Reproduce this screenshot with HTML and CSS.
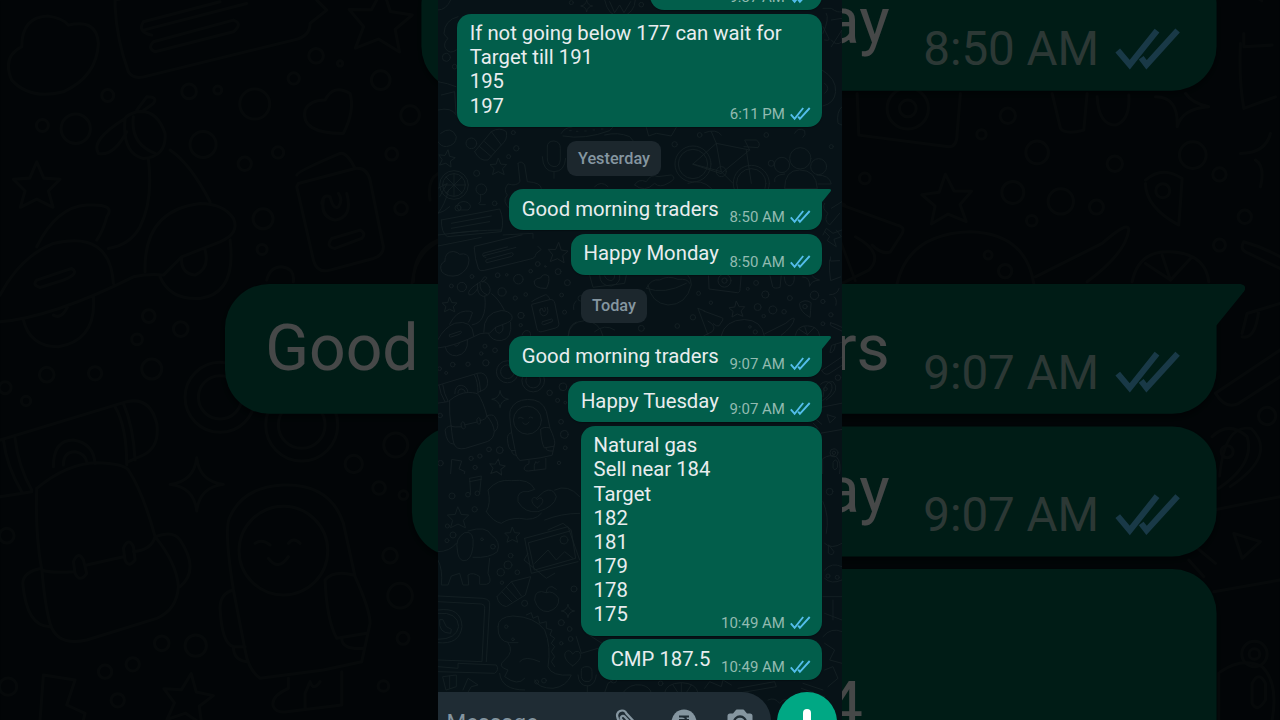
FILE: index.html
```html
<!DOCTYPE html>
<html lang="en">
<head>
<meta charset="utf-8">
<title>Chat</title>
<link rel="stylesheet" href="styles.css">
</head>
<body>
<svg class="defs" width="0" height="0" aria-hidden="true">
  <defs>
    <path id="star" d="M0-10 3-3 10-2.500 5 2.500 7 9.500 0 6-7 9.500-5 2.500-10-2.500-3-3Z"/>
    <path id="spark" d="M0-10Q1-1 10 0Q1 1 0 10Q-1 1-10 0Q-1-1 0-10Z"/>
    <path id="heart" d="M0 9C-14 0-10-10-4-9Q-1-8 0-5Q3-10 7-8C13-4 8 4 0 9Z"/>
    <g id="ticks"><path d="M.8 6.300 4.600 10.800 13.200 0M8.200 8.600 9.900 10.800 19.700 0"/></g>
  </defs>
</svg>

<div class="stage">
  <div class="backdrop" aria-hidden="true"></div>
  <main class="phone">
    <div class="screen">
      <svg class="wallpaper" viewBox="0 0 404 720" aria-hidden="true">
        <g transform="scale(.3333)" stroke-width="2.600">
          <path d="M60 50Q20 60 18 100Q22 110 30 115Q15 130 22 145Q35 165 55 150M0 30Q25 30 38 0M500 0Q510 50 550 50Q590 40 592 0M515 5 530 38 545 15 558 38 578 5"/>
          <circle cx="25" cy="172" r="12"/><circle cx="50" cy="200" r="7"/><circle cx="400" cy="8" r="6"/><circle cx="610" cy="14" r="7"/>
          <use href="#spark" stroke-width="1.400" transform="translate(446 18) scale(1.800)"/>
          <path d="M0 245Q30 250 54 260M0 330Q40 320 55 345M10 285 50 275 54 340M8 400Q40 375 55 410Q55 435 25 440Q8 440 0 425"/>
          <path d="M110 455 160 395Q185 380 205 395Q210 420 190 435L150 480Q125 485 110 455M125 440 160 470M160 395 190 435M140 425 172 455"/>
          <circle cx="100" cy="430" r="16"/><circle cx="235" cy="445" r="8"/><circle cx="212" cy="470" r="6"/><circle cx="116" cy="520" r="9"/><circle cx="226" cy="398" r="6"/>
          <use href="#star" stroke-width="1.040" transform="translate(26 475) rotate(10) scale(2.500)"/><use href="#star" stroke-width="1.040" transform="translate(181 500) scale(2.500)"/>
          <circle cx="48" cy="555" r="43"/><circle cx="48" cy="555" r="34"/><path d="M48 521V589M14 555H82M24 531 72 579M24 579 72 531M0 565 28 550 5 590M0 640Q20 615 32 570"/>
          <circle cx="130" cy="568" r="16"/><path d="M128 584V605Q118 610 125 614H142M62 610Q50 625 65 630H90Q105 620 90 608Q75 600 62 610"/>
          <path d="M240 490Q250 480 260 495L268 545Q310 548 310 565M240 490 246 545Q235 560 210 552Q195 570 208 585Q190 605 215 625M328 440Q328 423 348 423Q367 425 367 445V480Q365 500 348 500Q328 497 328 475ZM313 470Q315 515 348 515Q380 515 383 475M348 515V535"/>
          <path d="M370 400Q380 382 402 381M375 408Q440 420 515 392L525 381M395 392H400M415 394H420M440 393H445M465 390H470M490 387H495M500 405Q540 395 575 410L585 422M625 382 632 408 655 400 700 408 715 382"/>
          <circle cx="765" cy="492" r="54"/><circle cx="765" cy="492" r="44"/><circle cx="940" cy="550" r="54"/><circle cx="940" cy="550" r="44"/>
          <path d="M765 492 835 430 935 450 850 520ZM835 430 820 395M800 398Q835 385 850 405M935 450 920 420H955Q970 430 960 443L918 440M765 492 850 515 885 550M835 430 850 515M925 450 940 550"/><circle cx="850" cy="515" r="15"/>
          <circle cx="710" cy="433" r="8"/><circle cx="785" cy="405" r="7"/><circle cx="985" cy="405" r="7"/><circle cx="1000" cy="490" r="9"/><circle cx="1180" cy="440" r="6"/>
          <circle cx="1087" cy="475" r="32"/><circle cx="1032" cy="495" r="23"/><circle cx="1142" cy="500" r="24"/><path d="M1040 565Q1040 510 1085 510Q1135 510 1138 565ZM1010 545Q1005 525 1040 522M1137 525Q1175 525 1180 552H1140M1070 400Q1080 380 1100 392Q1105 405 1095 412"/>
          <path d="M590 555Q600 535 625 545Q640 520 660 530L700 525Q720 535 690 550Q665 565 650 550Q620 580 590 555M470 560Q490 540 510 560M750 550Q790 535 820 565"/>
          <path d="M1155 100Q1175 55 1165 40M1155 80 1170 110Q1180 125 1160 120M1180 60 1212 55M1180 140 1212 90V125Q1195 140 1180 120M1152 210Q1195 235 1193 275Q1190 310 1155 318M1160 250Q1180 265 1160 280M1212 320Q1195 335 1200 370L1212 375M1155 25H1180Q1200 40 1212 35"/>
          <path d="M0 640Q20 635 35 620M10 660 185 627Q200 660 190 695L28 710Q10 700 10 660M40 670 160 648M40 685 155 665M40 700 120 692M195 705 285 700V715M1160 610Q1150 625 1170 640Q1155 660 1175 675L1205 640M1180 625 1212 605M1155 705 1165 685 1185 700 1212 690"/>
          <circle cx="60" cy="624" r="9"/><circle cx="170" cy="610" r="7"/>
        </g>
        <g transform="translate(0 230) scale(.3333)" stroke-width="2.600">
          <path d="M455 136 465 172 560 160 565 136M485 136Q485 168 520 168Q550 160 545 136M500 138Q505 152 522 152 532 145 530 136M630 165Q640 220 690 225Q745 225 760 165Q760 145 750 136M625 175Q680 195 745 160M625 175Q640 145 665 150 690 135 720 148Q750 145 755 160"/>
          <path d="M0 15Q110 0 190 0M0 48 130 22M780 235 800 243M810 315 780 235M390 318Q395 275 440 272Q485 275 495 318M470 305Q500 280 530 300"/>
          <circle cx="610" cy="295" r="9"/><circle cx="765" cy="262" r="8"/><circle cx="718" cy="288" r="7"/><circle cx="428" cy="205" r="8"/><circle cx="782" cy="190" r="6"/>
          <path d="M1160 5 1175 20 1168 32 1195 50 1188 28 1210 20 1195 0M1155 500Q1160 450 1185 455Q1210 480 1165 510"/>
        </g>
        <g transform="translate(0 470) scale(.3333)" stroke-width="2.600">
          <path d="M95 25 130 18 125 70M95 25 98 72M95 35 130 28"/><circle cx="90" cy="74" r="7"/><circle cx="118" cy="70" r="7"/><circle cx="42" cy="78" r="9"/><circle cx="110" cy="118" r="8"/><circle cx="27" cy="212" r="6"/><circle cx="45" cy="195" r="9"/><circle cx="28" cy="168" r="6"/>
          <use href="#star" stroke-width=".810" transform="translate(60 143) scale(3.200)"/><use href="#star" stroke-width="1.130" transform="translate(223 195) scale(2.300)"/>
          <path d="M145 125Q160 100 150 60Q180 25 220 32Q275 25 290 58L270 65Q235 60 240 95Q260 130 300 125Q350 110 355 80Q345 50 318 65L295 85M145 125Q165 155 190 160Q210 145 245 145Q290 155 310 130M350 60Q390 40 425 80M320 150Q370 130 425 130"/><use href="#heart" stroke-width="1.500" transform="translate(298 98) scale(1.700)"/>
          <path d="M0 245Q35 245 55 220M58 240Q50 205 80 188Q110 180 105 230Q100 275 75 272Q60 268 58 240M90 183Q145 165 160 195Q190 215 178 245Q155 265 105 262M155 265 150 310Q165 340 145 343H125V320Q105 305 90 315L92 345H75L65 310 40 318 30 345H10Q15 300 0 270"/><circle cx="132" cy="208" r="4"/><circle cx="165" cy="230" r="7"/>
          <path d="M272 218 400 182 413 265 290 300ZM260 205 390 170 425 270M260 205 280 310 420 275M270 250 258 270 325 325 350 310M330 180 375 160 400 180M290 280 330 240 355 270 380 245 405 265"/><circle cx="378" cy="210" r="12"/>
          <circle cx="188" cy="307" r="11"/><circle cx="210" cy="285" r="12"/><circle cx="218" cy="257" r="7"/><circle cx="238" cy="307" r="7"/><circle cx="192" cy="338" r="5"/><circle cx="260" cy="400" r="9"/><circle cx="408" cy="357" r="9"/>
          <path d="M177 380 220 335 278 320 262 375 205 410Q180 405 177 380M192 366 222 396M220 335 250 378M205 352 238 388M325 368Q290 355 290 390Q300 425 330 425Q365 415 362 385Q345 360 325 368Q325 350 342 350M342 350 355 358"/>
          <path d="M0 378 135 385Q158 388 155 405L145 575M0 395 130 402Q142 405 140 415L132 575 0 570M0 590 60 595V580L175 585Q185 600 170 610L0 605M0 420Q70 410 72 470Q65 525 0 518M0 430Q60 425 62 470Q55 508 0 508M5 450Q0 490 38 490L40 478 25 470 15 450Z"/>
          <path d="M180 470Q180 440 225 438Q290 440 320 480Q340 530 330 590Q340 620 400 615Q385 650 345 655 300 655 290 630M180 470Q178 515 215 518H240M210 518Q230 545 200 570Q175 590 210 600L200 620Q240 650 260 625M245 575Q260 555 305 575M265 435 280 428 285 445 300 438 305 460 325 455 325 475 342 480 336 495 350 505 340 520 350 530 340 545 350 560 340 575 350 590M185 610Q190 660 260 660"/><circle cx="205" cy="470" r="5"/><circle cx="225" cy="508" r="4"/>
          <use href="#spark" stroke-width="1.300" transform="translate(390 423) scale(2)"/><circle cx="370" cy="458" r="9"/><circle cx="395" cy="477" r="7"/><circle cx="398" cy="507" r="7"/><circle cx="370" cy="520" r="5"/><use href="#heart" stroke-width="1.040" transform="translate(404 565) scale(2.500)"/>
          <path d="M15 620 55 615V650L25 660ZM35 618V655M75 660 90 625 120 645 100 650 85 675M430 600Q430 590 447 590Q462 590 462 605V625Q455 638 447 635Q432 635 430 620ZM420 615Q422 648 450 648Q472 645 475 615M448 648V668M500 668 510 640 535 625M555 668Q575 640 610 645Q635 650 640 668M680 668Q685 640 730 638Q775 640 780 668M730 640V668M705 645 720 668M760 645 745 668M800 655 815 635 850 650 855 630 880 645M900 655 1010 635 1015 650 910 668M990 690Q1010 680 1025 700Q1040 680 1060 695M1095 640 1155 660M1090 655 1160 680M1155 500Q1180 470 1212 485M1160 520 1190 540 1175 570 1212 580M1160 600 1185 590 1200 625 1170 650M1160 300Q1180 275 1212 290M1160 325Q1180 345 1212 330M1155 380H1212M1185 390V450M1160 430 1212 450M1160 220Q1180 240 1212 220M415 500 430 550 480 535M445 490 500 525"/>
          <circle cx="527" cy="630" r="9"/><circle cx="668" cy="640" r="7"/><circle cx="318" cy="632" r="7"/><circle cx="296" cy="636" r="6"/><circle cx="1175" cy="65" r="10"/><circle cx="1170" cy="318" r="6"/><circle cx="1198" cy="322" r="6"/><path d="M1155 95Q1175 140 1165 190M1172 225 1188 245Q1185 260 1172 250Z"/>
        </g>
        <g transform="translate(0 246.400) scale(.10522)" stroke-width="9">
          <path d="M65 140Q65 50 145 48Q190 55 205 75Q290 55 295 130Q290 230 190 275Q90 300 35 240Q5 170 65 140M345 20Q350 120 385 215Q400 240 440 228L880 120Q930 110 930 70L980 30 950 0M345 20V0L800-110M430 90 740 10M455 105Q410 95 430 65L660 5M465 155 700 95Q730 70 700 60L460 125Q440 145 465 155"/>
          <use href="#star" stroke-width=".950" transform="translate(1140 60) rotate(5) scale(9.500)"/><use href="#star" stroke-width="1.300" transform="translate(110 555) scale(7)"/>
          <circle cx="323" cy="286" r="18"/><circle cx="567" cy="274" r="22"/><circle cx="653" cy="270" r="12"/><circle cx="764" cy="312" r="45"/><circle cx="881" cy="235" r="17"/><circle cx="948" cy="167" r="22"/><circle cx="1020" cy="190" r="8"/><circle cx="1142" cy="240" r="28"/><circle cx="1230" cy="345" r="28"/><circle cx="227" cy="386" r="44"/><circle cx="127" cy="376" r="18"/><circle cx="609" cy="433" r="39"/><circle cx="734" cy="491" r="20"/><circle cx="834" cy="457" r="17"/><circle cx="1175" cy="462" r="18"/><circle cx="1203" cy="625" r="19"/><circle cx="789" cy="656" r="30"/><circle cx="786" cy="748" r="15"/><circle cx="446" cy="948" r="19"/><circle cx="542" cy="987" r="22"/><circle cx="411" cy="1018" r="16"/>
          <path d="M915 330Q930 300 975 300Q1000 250 1050 280Q1065 330 1030 400Q900 400 915 330"/>
          <path d="M375 355Q270 420 295 460Q340 470 380 395M375 355Q365 460 430 475Q500 470 495 400Q470 325 410 335Q380 345 375 355M400 350Q390 430 465 460M410 330 440 290Q475 290 460 310L425 335M445 478Q460 600 420 680Q390 735 325 745M510 450Q570 490 630 605M110 740Q170 620 260 615Q350 610 320 650Q310 690 290 720M0 885Q60 770 160 730Q330 690 340 850M0 965Q160 950 400 830Q450 820 490 825L545 770 660 725Q720 700 700 655Q670 610 600 610Q430 630 435 815M690 720Q710 880 600 895Q510 900 480 830M70 960Q90 1040 175 1040Q290 1020 280 890M110 840 215 805Q240 820 190 840L120 862Q95 855 110 840M545 770Q540 820 585 825Q630 805 615 750M160 945Q185 960 205 915"/>
          <path d="M890 525Q890 515 1020 460Q1040 455 1065 505M895 550 1065 505Q1100 500 1110 540L1150 740Q1150 765 1120 775L990 810Q950 820 940 780L890 560ZM965 610Q970 580 990 590M1040 580Q1060 650 1005 660Q960 650 970 600M990 590Q1000 630 1015 620Q1030 600 1015 580M995 715 1080 690Q1100 700 1085 715L1005 745Q975 740 995 715M800 840Q810 800 845 800Q885 805 880 845M1240 845Q1240 750 1314 720M1290 600Q1280 540 1314 520"/>
        </g>
        <g transform="translate(0 360) scale(.10522)" stroke-width="9">
          <circle cx="140" cy="44" r="22"/><circle cx="285" cy="40" r="20"/><circle cx="455" cy="27" r="30"/><circle cx="15" cy="83" r="18"/><circle cx="78" cy="123" r="14"/><circle cx="660" cy="112" r="105"/><circle cx="660" cy="112" r="65"/><circle cx="905" cy="195" r="108"/><circle cx="905" cy="195" r="70"/><circle cx="1061" cy="312" r="26"/><circle cx="1137" cy="384" r="19"/><circle cx="1187" cy="255" r="36"/><circle cx="1210" cy="405" r="13"/><circle cx="1170" cy="587" r="22"/><circle cx="1200" cy="707" r="37"/><circle cx="1209" cy="835" r="18"/><circle cx="1150" cy="978" r="16"/><circle cx="20" cy="527" r="22"/><circle cx="485" cy="850" r="22"/><circle cx="587" cy="857" r="32"/><circle cx="398" cy="913" r="20"/><circle cx="315" cy="935" r="20"/><circle cx="353" cy="1021" r="20"/><circle cx="24" cy="980" r="26"/>
          <path d="M0 240 380 125Q450 110 470 190Q480 260 430 285L385 305M0 410 95 395M10 240Q20 320 65 395M45 235Q55 320 95 390M345 140Q380 200 380 315M370 130Q400 200 405 300M160 320Q160 240 220 240Q280 250 285 310M190 315Q190 275 225 275Q255 280 260 305"/>
          <path d="M110 385Q200 310 290 308Q370 310 385 330Q430 400 465 530 455 570 400 575M110 385Q105 520 125 630Q150 640 220 635M260 615 370 590M465 530Q530 610 535 680Q530 750 470 775L260 840Q170 860 150 790Q135 740 125 625M125 625Q70 635 68 670 80 800 150 800M465 530Q520 510 540 540Q600 630 540 680M220 605Q235 570 250 600L260 640Q240 670 225 640ZM370 565Q385 530 400 560L405 600Q385 625 375 600Z"/>
          <use href="#spark" stroke-width="1.100" transform="translate(590 373) scale(8)"/><use href="#star" stroke-width="1.200" transform="translate(563 1015) rotate(8) scale(7.500)"/>
          <circle cx="850" cy="572" r="133"/>
          <path d="M700 690Q670 500 690 470Q730 380 850 375Q990 370 1030 490L1065 650Q1110 750 1110 790L1085 905 970 930 780 955Q745 930 735 870ZM700 690Q660 700 660 745 665 850 700 860H735M700 860Q700 900 740 905M975 660Q1000 630 1060 645M975 660Q980 780 1010 835L1100 820M1025 835Q1025 870 1090 865M765 550Q785 535 810 555M865 550Q880 530 900 550M805 595Q835 635 865 590M865 955V985Q810 1010 820 1040 830 1060 860 1055L1025 1035V935M915 1045V1000L930 965Q940 995 960 965M120 1080 130 945 225 960 200 1035 255 1060 250 1080"/>
        </g>
        <g transform="translate(265.800 246.400) scale(.10522)" stroke-width="9">
          <path d="M45 280 50 405 320 440Q345 440 345 400L355 280M630 280 655 385Q670 405 725 390L735 280M765 290Q770 375 820 375Q865 360 860 285M940 290Q1010 290 1005 380Q1020 325 1100 320 1050 310 1030 280M1195 130Q1190 240 1205 325L1300 290M1205 100V140L1290 135M1195 460Q1270 460 1285 400M1240 480Q1270 500 1255 560M910 540Q960 495 1020 535Q1015 610 1010 675 910 620 910 550M0 615 165 675Q190 680 180 700L145 755Q120 765 90 735M40 710Q130 760 80 810L0 850M165 850Q200 700 385 695Q550 700 575 850M580 830 780 730Q860 660 860 690 850 760 735 845M1205 725Q1190 750 1220 760L1314 805M1205 725Q1260 740 1314 770M1200 1000 1215 940 1314 910M1200 1010Q1240 1020 1250 930M870 845Q890 750 985 755Q1090 760 1100 845M985 840 910 790M985 840 960 765M985 840 1050 770"/>
          <use href="#star" stroke-width="1.200" transform="translate(315 597) rotate(-4) scale(7.500)"/>
          <circle cx="197" cy="325" r="62"/><circle cx="197" cy="325" r="25"/><circle cx="68" cy="535" r="16"/><circle cx="497" cy="347" r="23"/><circle cx="418" cy="403" r="14"/><circle cx="585" cy="457" r="34"/><circle cx="512" cy="577" r="33"/><circle cx="656" cy="604" r="38"/><circle cx="763" cy="621" r="21"/><circle cx="569" cy="662" r="16"/><circle cx="818" cy="491" r="23"/><circle cx="1052" cy="465" r="40"/><circle cx="1132" cy="523" r="20"/><circle cx="962" cy="572" r="21"/><circle cx="1208" cy="650" r="20"/><circle cx="1132" cy="735" r="18"/><circle cx="438" cy="765" r="12"/><circle cx="489" cy="813" r="20"/>
        </g>
        <g transform="translate(265.800 360) scale(.10522)" stroke-width="9">
          <path d="M1120 100Q1150 150 1190 130L1314 50M1120 100 1314-30M1110 230Q1160 180 1215 230Q1240 310 1130 385M1115 450 1314 410M1175 520 1255 545 1200 595ZM1040 600 1085 650M1060 560 1120 610M1115 695 1314 660M1135 935Q1200 890 1260 920Q1310 970 1290 1080M1230 970Q1250 930 1270 970V1020Q1245 1060 1230 1030ZM1130 940V1080"/>
          <circle cx="1155" cy="275" r="18"/><circle cx="1275" cy="168" r="26"/><circle cx="1237" cy="882" r="38"/><circle cx="1237" cy="882" r="16"/>
        </g>
      </svg>

      <section class="thread">
        <article class="bubble clipped"><span class="meta">9:37 AM<svg class="ticks" viewBox="0 0 20 12"><use href="#ticks"/></svg></span></article>
        <article class="bubble stacked long">
          <p class="body">If not going below 177 can wait for<br>Target till 191<br>195<br>197</p>
          <span class="meta">6:11 PM<svg class="ticks" viewBox="0 0 20 12"><use href="#ticks"/></svg></span>
        </article>
        <div class="day"><span class="chip">Yesterday</span></div>
        <article class="bubble">
          <svg class="tail" viewBox="0 0 11 14"><path d="M0 0H9.500Q11.800.5 10.700 2.300L2 13H0Z"/></svg>
          <p class="body">Good morning traders</p>
          <span class="meta">8:50 AM<svg class="ticks" viewBox="0 0 20 12"><use href="#ticks"/></svg></span>
        </article>
        <article class="bubble">
          <p class="body">Happy Monday</p>
          <span class="meta">8:50 AM<svg class="ticks" viewBox="0 0 20 12"><use href="#ticks"/></svg></span>
        </article>
        <div class="day today"><span class="chip">Today</span></div>
        <article class="bubble">
          <svg class="tail" viewBox="0 0 11 14"><path d="M0 0H9.500Q11.800.5 10.700 2.300L2 13H0Z"/></svg>
          <p class="body">Good morning traders</p>
          <span class="meta">9:07 AM<svg class="ticks" viewBox="0 0 20 12"><use href="#ticks"/></svg></span>
        </article>
        <article class="bubble">
          <p class="body">Happy Tuesday</p>
          <span class="meta">9:07 AM<svg class="ticks" viewBox="0 0 20 12"><use href="#ticks"/></svg></span>
        </article>
        <article class="bubble stacked call">
          <p class="body">Natural gas<br>Sell near 184<br>Target<br>182<br>181<br>179<br>178<br>175</p>
          <span class="meta">10:49 AM<svg class="ticks" viewBox="0 0 20 12"><use href="#ticks"/></svg></span>
        </article>
        <article class="bubble">
          <p class="body">CMP 187.5</p>
          <span class="meta">10:49 AM<svg class="ticks" viewBox="0 0 20 12"><use href="#ticks"/></svg></span>
        </article>
      </section>
    </div>

    <footer class="composer">
      <div class="field">
        <span class="placeholder">Message</span>
        <svg class="tool" viewBox="0 0 26 26"><path d="M24 18 11.500 4.500A4.800 4.800 0 0 0 2.500 8.500Q2.500 10 4 11.500L16 24.500M20 19 9.500 7.500A2 2 0 0 0 6.500 10.500L18 23" fill="none" stroke="#8596a0" stroke-width="2.300"/></svg>
        <svg class="tool" viewBox="0 0 26 26"><circle cx="13" cy="13" r="12.500" fill="#8596a0"/><path d="M8 7.500H18M8 11H18M11 7.500Q15.500 8 15 11 14 14 9 14L15 20" fill="none" stroke="#1f2c34" stroke-width="2"/></svg>
        <svg class="tool" viewBox="0 0 26 26"><path d="M8.500 1.500Q9 .5 10 .5H16Q17 .5 17.500 1.500L20 4.500H23Q25.500 4.500 25.500 7V22Q25.500 24 23 24H3Q.5 24 .5 22V7Q.5 4.500 3 4.500H6Z" fill="#8596a0"/><circle cx="13" cy="13.500" r="6" fill="#8596a0" stroke="#1f2c34" stroke-width="2.300"/></svg>
      </div>
      <div class="mic"><svg viewBox="0 0 60 60"><rect x="26" y="17" width="8" height="21" rx="4" fill="#fff"/><path d="M20 31a10 10 0 0 0 20 0" fill="none" stroke="#fff" stroke-width="3"/></svg></div>
    </footer>
  </main>
</div>
<script src="backdrop.js"></script>
</body>
</html>
```

FILE: styles.css
```css
* { box-sizing: border-box; }
body { margin: 0; background: #000; font-family: Roboto, "Liberation Sans", sans-serif; }
.defs { position: absolute; }
.stage {
  position: relative;
  display: flex;
  justify-content: center;
  width: 1280px;
  height: 720px;
  overflow: hidden;
}

/* Enlarged, dimmed copy of the chat that fills the frame */
.backdrop { position: absolute; inset: 0; display: flex; justify-content: center; opacity: .3; overflow: hidden; }
.backdrop .screen { flex: none; transform: scale(3.168); }
.backdrop .thread > :nth-child(-n+4),
.backdrop .day,
.backdrop .bubble:last-child,
.backdrop .call .meta { visibility: hidden; }

.phone { position: relative; width: 404px; height: 720px; overflow: hidden; }
.screen { position: relative; width: 404px; height: 720px; overflow: hidden; background: #071217; }
.wallpaper { position: absolute; inset: 0; width: 404px; height: 720px; fill: none; stroke: #152024; stroke-linejoin: round; stroke-linecap: round; }

.thread {
  position: relative;
  display: flex;
  flex-direction: column;
  align-items: flex-end;
  gap: 3.7px;
  margin-top: -31px;
  padding-right: 20.4px;
}
.bubble {
  position: relative;
  display: grid;
  grid-template-columns: auto auto;
  column-gap: 10.6px;
  padding: 7.5px 11.7px 9.5px 12.7px;
  border-radius: 14px;
  background: #025e4b;
  box-shadow: 0 1px 1px rgba(0, 0, 0, .25);
}
.bubble:has(.tail) { border-top-right-radius: 0; }
.body { margin: 0; color: #e9edef; font-size: 20.3px; line-height: 24.1px; white-space: nowrap; }
.meta {
  display: flex;
  gap: 5px;
  align-items: center;
  align-self: end;
  justify-self: end;
  margin-bottom: -5.4px;
  color: #92bbb1;
  font-size: 15px;
  line-height: 18px;
  white-space: nowrap;
}
.ticks { width: 20px; height: 12px; fill: none; stroke: #53bdeb; stroke-width: 1.9; overflow: visible; }
.tail { position: absolute; top: 0; right: -9px; width: 11px; height: 14px; fill: #025e4b; }
.stacked { grid-template-columns: 1fr; }
.stacked > * { grid-area: 1 / 1; }
.long { width: 364.5px; }
.call { width: 240.7px; }
.clipped { width: 171.5px; height: 41.1px; grid-template-columns: 1fr; }

.day { align-self: stretch; display: flex; justify-content: center; padding: 10.4px 31.6px 9.6px 0; }
.today { padding-top: 10.1px; padding-bottom: 9.45px; }
.chip {
  height: 34.5px;
  padding: .8px 11.4px 0;
  border-radius: 9px;
  background: #1c272d;
  color: #8596a0;
  font-size: 16.3px;
  font-weight: 500;
  line-height: 34.5px;
}

.composer { position: absolute; left: -40px; right: 5.5px; top: 692px; display: flex; gap: 6px; }
.field { flex: 1; display: flex; align-items: flex-start; height: 58px; padding: 16.5px 17.5px 0 48.5px; border-radius: 29px; background: #1f2c34; }
.placeholder { flex: 1; padding-top: 1.8px; color: #8596a0; font-size: 22.5px; line-height: 24px; }
.tool { width: 26px; height: 26px; margin-left: 30px; }
.mic { width: 60px; height: 60px; border-radius: 50%; background: #00a884; }
```

FILE: backdrop.js
```js
const screenNode = document.querySelector('.phone .screen');
document.querySelector('.backdrop').append(screenNode.cloneNode(true));
```
